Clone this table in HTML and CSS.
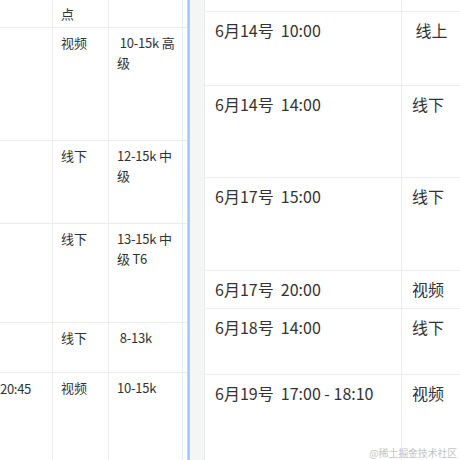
FILE: index.html
```html
<!DOCTYPE html>
<html lang="zh">
<head>
<meta charset="utf-8">
<link rel="stylesheet" href="styles.css">
</head>
<body>
<div class="page">
  <div class="left">
    <div class="lrow r0"><div class="c c1"></div><div class="c c2">点</div><div class="c c3"></div></div>
    <div class="lrow r1"><div class="c c1"></div><div class="c c2">视频</div><div class="c c3">&nbsp;10-15k 高级</div></div>
    <div class="lrow r2"><div class="c c1"></div><div class="c c2">线下</div><div class="c c3">12-15k 中级</div></div>
    <div class="lrow r3"><div class="c c1"></div><div class="c c2">线下</div><div class="c c3">13-15k 中级 T6</div></div>
    <div class="lrow r4"><div class="c c1"></div><div class="c c2">线下</div><div class="c c3">&nbsp;8-13k</div></div>
    <div class="lrow r5"><div class="c c1 cut">20:45</div><div class="c c2">视频</div><div class="c c3">10-15k</div></div>
  </div>
  <div class="divider"></div>
  <div class="right">
    <div class="gutter"></div>
    <div class="rtable">
      <div class="rrow s0"><div class="d d1"></div><div class="d d2"></div></div>
      <div class="rrow s1"><div class="d d1">6月14号&nbsp; 10:00</div><div class="d d2">&nbsp;线上</div></div>
      <div class="rrow s2"><div class="d d1">6月14号&nbsp; 14:00</div><div class="d d2">线下</div></div>
      <div class="rrow s3"><div class="d d1">6月17号&nbsp; 15:00</div><div class="d d2">线下</div></div>
      <div class="rrow s4"><div class="d d1">6月17号&nbsp; 20:00</div><div class="d d2">视频</div></div>
      <div class="rrow s5"><div class="d d1">6月18号&nbsp; 14:00</div><div class="d d2">线下</div></div>
      <div class="rrow s6"><div class="d d1">6月19号&nbsp; 17:00 - 18:10</div><div class="d d2">视频</div></div>
    </div>
  </div>
  <div class="watermark">@稀土掘金技术社区</div>
</div>
</body>
</html>
```

FILE: styles.css
```css
* { box-sizing: border-box; }
html, body { margin: 0; padding: 0; background: #fff; }
body {
  font-family: "Noto Sans CJK SC", "Noto Sans", sans-serif;
  color: #333;
  width: 460px;
  height: 460px;
  overflow: hidden;
}
.page {
  position: relative;
  display: flex;
  height: 460px;
}
.left {
  width: 187px;
  flex: none;
  display: flex;
  flex-direction: column;
  font-size: 13px;
  line-height: 20px;
}
.lrow {
  display: flex;
  border-top: 1px solid #ececec;
}
.lrow.r0 { border-top: none; height: 27px; }
.lrow.r1 { height: 113px; }
.lrow.r2 { height: 83px; }
.lrow.r3 { height: 99px; }
.lrow.r4 { height: 50px; }
.lrow.r5 { flex: 1; }
.c {
  padding: 5px 8px 0 8px;
  border-right: 1px solid #ececec;
}
.r0 .c { padding-top: 4px; }
.c1 { width: 53px; flex: none; }
.c2 { width: 56px; flex: none; }
.c3 { width: 74px; flex: none; padding-right: 1px; letter-spacing: -0.2px; }
.c1.cut { padding-left: 0; white-space: nowrap; overflow: hidden; padding-top: 6px; letter-spacing: -0.3px; }
.divider {
  width: 3px;
  flex: none;
  background: linear-gradient(to right, #d6e6fd, #9cc2fb 40%, #9cc2fb 70%, #d6e6fd);
}
.right {
  flex: 1;
  display: flex;
  min-width: 0;
}
.gutter {
  width: 15px;
  flex: none;
  background: #f4f5f5;
  border-right: 1px solid #ebebeb;
}
.rtable {
  flex: 1;
  display: flex;
  flex-direction: column;
  font-size: 16px;
  line-height: 22px;
}
.rrow {
  display: flex;
  border-top: 1px solid #ececec;
}
.rrow.s0 { border-top: none; height: 11px; }
.rrow.s1 { height: 74px; }
.rrow.s2 { height: 92px; }
.rrow.s3 { height: 93px; }
.rrow.s4 { height: 38px; }
.rrow.s5 { height: 66px; }
.rrow.s6 { flex: 1; }
.d {
  padding: 7px 10px 0 10px;
  white-space: nowrap;
}
.d1 {
  width: 197px;
  flex: none;
  border-right: 1px solid #ececec;
}
.d2 { flex: 1; }
.watermark {
  position: absolute;
  right: 3px;
  bottom: 0px;
  font-size: 10px;
  line-height: 14px;
  letter-spacing: -0.2px;
  color: #c4c4c4;
}
```
